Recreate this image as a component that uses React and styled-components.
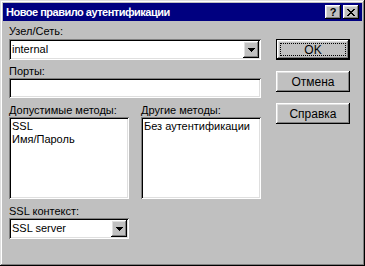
import React from "react";
import styled, { createGlobalStyle } from "styled-components";

const GlobalStyle = createGlobalStyle`
  html, body {
    margin: 0;
    padding: 0;
    background: #c0c0c0;
  }
  body {
    font-family: "Liberation Sans", Arial, sans-serif;
    font-size: 11px;
  }
`;

const raised = `
  box-shadow: inset -1px -1px #000, inset 1px 1px #fff,
    inset -2px -2px #808080, inset 2px 2px #dfdfdf;
`;

const sunken = `
  box-shadow: inset 1px 1px #808080, inset -1px -1px #fff,
    inset 2px 2px #000, inset -2px -2px #dfdfdf;
`;

const Window = styled.div`
  width: 365px;
  height: 266px;
  box-sizing: border-box;
  padding: 3px;
  background: #c0c0c0;
  box-shadow: inset -1px -1px #000, inset 1px 1px #dfdfdf,
    inset -2px -2px #808080, inset 2px 2px #fff;
  display: flex;
  flex-direction: column;
  color: #000;
`;

const TitleBar = styled.div`
  height: 18px;
  background: #000080;
  display: flex;
  align-items: center;
  justify-content: space-between;
  padding: 0 3px 0 3px;
`;

const Title = styled.span`
  color: #fff;
  font-weight: bold;
  font-size: 11px;
  letter-spacing: -0.5px;
  white-space: nowrap;
`;

const TitleButtons = styled.div`
  display: flex;
  gap: 2px;
`;

const TitleButton = styled.div`
  width: 16px;
  height: 14px;
  background: #c0c0c0;
  ${raised}
  display: flex;
  align-items: center;
  justify-content: center;
  font-weight: bold;
  font-size: 11px;
  line-height: 14px;
`;

const Body = styled.div`
  display: flex;
  padding: 4px 0 0 6px;
  gap: 15px;
`;

const Form = styled.div`
  width: 252px;
  display: flex;
  flex-direction: column;
`;

const Label = styled.div`
  height: 13px;
  line-height: 13px;
  margin-top: ${p => p.$top || 0}px;
  white-space: nowrap;
`;

const Field = styled.div`
  width: ${p => p.$width}px;
  height: ${p => p.$height}px;
  box-sizing: border-box;
  background: #fff;
  ${sunken}
  padding: 2px 2px 2px 3px;
  display: flex;
  align-items: center;
  justify-content: space-between;
  margin-top: ${p => p.$top || 0}px;
`;

const ListBox = styled.div`
  width: ${p => p.$width}px;
  height: ${p => p.$height}px;
  box-sizing: border-box;
  background: #fff;
  ${sunken}
  padding: 3px 2px 2px 3px;
  display: flex;
  flex-direction: column;
  align-items: flex-start;
`;

const FieldText = styled.span`
  font-size: 11px;
  line-height: 13px;
  white-space: nowrap;
`;

const ListItem = styled.div`
  font-size: 11px;
  line-height: 13px;
  white-space: nowrap;
`;

const DropButton = styled.div`
  width: 16px;
  height: 17px;
  box-sizing: border-box;
  background: #c0c0c0;
  ${raised}
  display: flex;
  align-items: center;
  justify-content: center;
`;

const ListsRow = styled.div`
  display: flex;
  gap: 12px;
  margin-top: 6px;
`;

const ListColumn = styled.div`
  display: flex;
  flex-direction: column;
`;

const Buttons = styled.div`
  display: flex;
  flex-direction: column;
  gap: 11px;
  padding-top: 14px;
`;

const Button = styled.div`
  width: 74px;
  height: 21px;
  box-sizing: border-box;
  background: #c0c0c0;
  ${p =>
    p.$default
      ? `box-shadow: inset 0 0 0 1px #000, inset -2px -2px #000, inset 2px 2px #fff,
    inset -3px -3px #808080, inset 3px 3px #dfdfdf;`
      : raised}
  display: flex;
  align-items: center;
  justify-content: center;
  font-size: 12px;
  position: relative;
`;

const Focus = styled.div`
  position: absolute;
  left: 4px;
  top: 4px;
  right: 4px;
  bottom: 4px;
  border: 1px dotted #000;
`;

const Arrow = () => (
  <svg width="7" height="4" viewBox="0 0 7 4">
    <path d="M0 0h7L3.5 4z" fill="#000" shapeRendering="crispEdges" />
  </svg>
);

const CloseIcon = () => (
  <svg width="8" height="7" viewBox="0 0 8 7">
    <path
      d="M0 0h2v1h1v1h2V1h1V0h2v1H7v1H6v1H5v1h1v1h1v1h1v1H6V6H5V5H3v1H2v1H0V6h1V5h1V4h1V3H2V2H1V1H0z"
      fill="#000"
      shapeRendering="crispEdges"
    />
  </svg>
);

const Combo = ({ width, value, top }) => (
  <Field $width={width} $height={21} $top={top}>
    <FieldText>{value}</FieldText>
    <DropButton>
      <Arrow />
    </DropButton>
  </Field>
);

export default function App() {
  return (
    <>
      <GlobalStyle />
      <Window>
        <TitleBar>
          <Title>Новое правило аутентификации</Title>
          <TitleButtons>
            <TitleButton>?</TitleButton>
            <TitleButton>
              <CloseIcon />
            </TitleButton>
          </TitleButtons>
        </TitleBar>
        <Body>
          <Form>
            <Label>Узел/Сеть:</Label>
            <Combo width={252} value="internal" top={1} />
            <Label $top={5}>Порты:</Label>
            <Field $width={252} $height={20} />
            <ListsRow>
              <ListColumn>
                <Label>Допустимые методы:</Label>
                <ListBox $width={120} $height={82}>
                  <ListItem>SSL</ListItem>
                  <ListItem>Имя/Пароль</ListItem>
                </ListBox>
              </ListColumn>
              <ListColumn>
                <Label>Другие методы:</Label>
                <ListBox $width={120} $height={82}>
                  <ListItem>Без аутентификации</ListItem>
                </ListBox>
              </ListColumn>
            </ListsRow>
            <Label $top={6}>SSL контекст:</Label>
            <Combo width={120} value="SSL server" />
          </Form>
          <Buttons>
            <Button $default>
              OK
              <Focus />
            </Button>
            <Button>Отмена</Button>
            <Button>Справка</Button>
          </Buttons>
        </Body>
      </Window>
    </>
  );
}
